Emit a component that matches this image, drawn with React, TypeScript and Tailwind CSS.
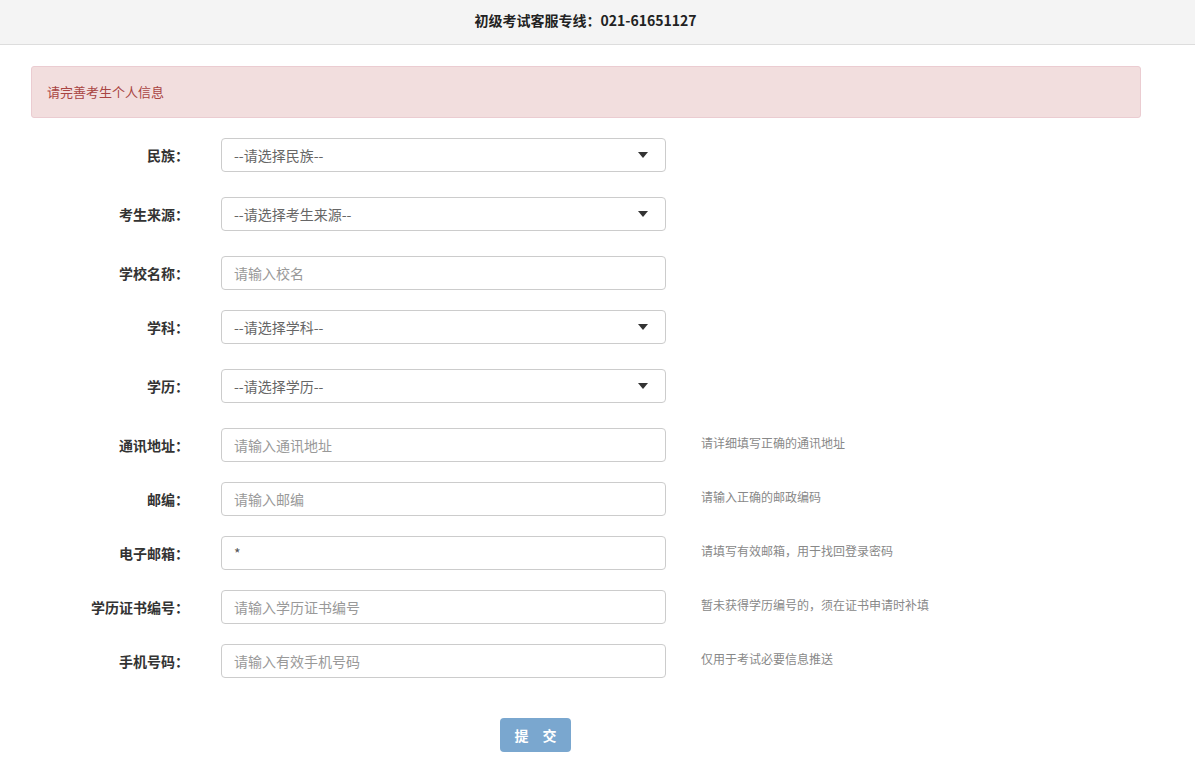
import React, { useState } from 'react';

type Field = {
  label: string;
  kind: 'select' | 'input';
  placeholder: string;
  help?: string;
};

const fields: Field[] = [
  { label: '民族：', kind: 'select', placeholder: '--请选择民族--' },
  { label: '考生来源：', kind: 'select', placeholder: '--请选择考生来源--' },
  { label: '学校名称：', kind: 'input', placeholder: '请输入校名' },
  { label: '学科：', kind: 'select', placeholder: '--请选择学科--' },
  { label: '学历：', kind: 'select', placeholder: '--请选择学历--' },
  { label: '通讯地址：', kind: 'input', placeholder: '请输入通讯地址', help: '请详细填写正确的通讯地址' },
  { label: '邮编：', kind: 'input', placeholder: '请输入邮编', help: '请输入正确的邮政编码' },
  { label: '电子邮箱：', kind: 'input', placeholder: '', help: '请填写有效邮箱，用于找回登录密码' },
  { label: '学历证书编号：', kind: 'input', placeholder: '请输入学历证书编号', help: '暂未获得学历编号的，须在证书申请时补填' },
  { label: '手机号码：', kind: 'input', placeholder: '请输入有效手机号码', help: '仅用于考试必要信息推送' },
];

function Caret() {
  return (
    <svg width="10" height="6" viewBox="0 0 10 6" className="shrink-0">
      <path d="M0 0 H10 L5 6 Z" fill="#333" />
    </svg>
  );
}

function App() {
  const [values, setValues] = useState<Record<number, string>>({ 7: '*' });

  return (
    <div className="min-h-screen w-full bg-white font-['Microsoft_YaHei','Noto_Sans_CJK_SC',sans-serif] text-[14px] text-[#333]">
      <header className="h-[45px] bg-[#f4f4f4] border-b border-[#dddddd] flex items-center justify-center pr-[24px]">
        <h1 className="font-bold text-[14px] text-[#222] -mt-[4px]">初级考试客服专线：021-61651127</h1>
      </header>

      <div className="ml-[31px] w-[1110px] pt-[21px]">
        <div className="h-[52px] bg-[#f2dede] border border-[#ebccd1] rounded-[3px] text-[#a94442] text-[13px] flex items-center px-[15px]">
          请完善考生个人信息
        </div>

        <form className="mt-[20px]" onSubmit={(e) => e.preventDefault()}>
          {fields.map((f, i) => (
            <div
              key={f.label}
              className={`flex items-center ${f.kind === 'select' ? 'mb-[25px]' : 'mb-[20px]'}`}
            >
              <label className="w-[158px] text-right font-bold text-[14px] text-[#333]">{f.label}</label>
              <div className="ml-[32px] w-[445px] h-[34px]">
                {f.kind === 'select' ? (
                  <div className="h-full border border-[#cccccc] rounded-[4px] flex items-center justify-between pl-[12px] pr-[17px] text-[#666]">
                    <span>{f.placeholder}</span>
                    <Caret />
                  </div>
                ) : (
                  <input
                    className="h-full w-full border border-[#cccccc] rounded-[4px] px-[12px] text-[#555] placeholder:text-[#999] outline-none"
                    placeholder={f.placeholder}
                    value={values[i] ?? ''}
                    onChange={(e) => setValues({ ...values, [i]: e.target.value })}
                  />
                )}
              </div>
              {f.help && <span className="ml-[35px] text-[12px] text-[#888] -mt-[4px]">{f.help}</span>}
            </div>
          ))}

          <div className="flex pt-[20px]">
            <button
              type="submit"
              className="ml-[469px] w-[71px] h-[34px] rounded-[4px] bg-[#7aa7cf] text-white text-[14px] font-bold tracking-[1em] pl-[14px]"
            >
              提交
            </button>
          </div>
        </form>
      </div>
    </div>
  );
}

export default App;
